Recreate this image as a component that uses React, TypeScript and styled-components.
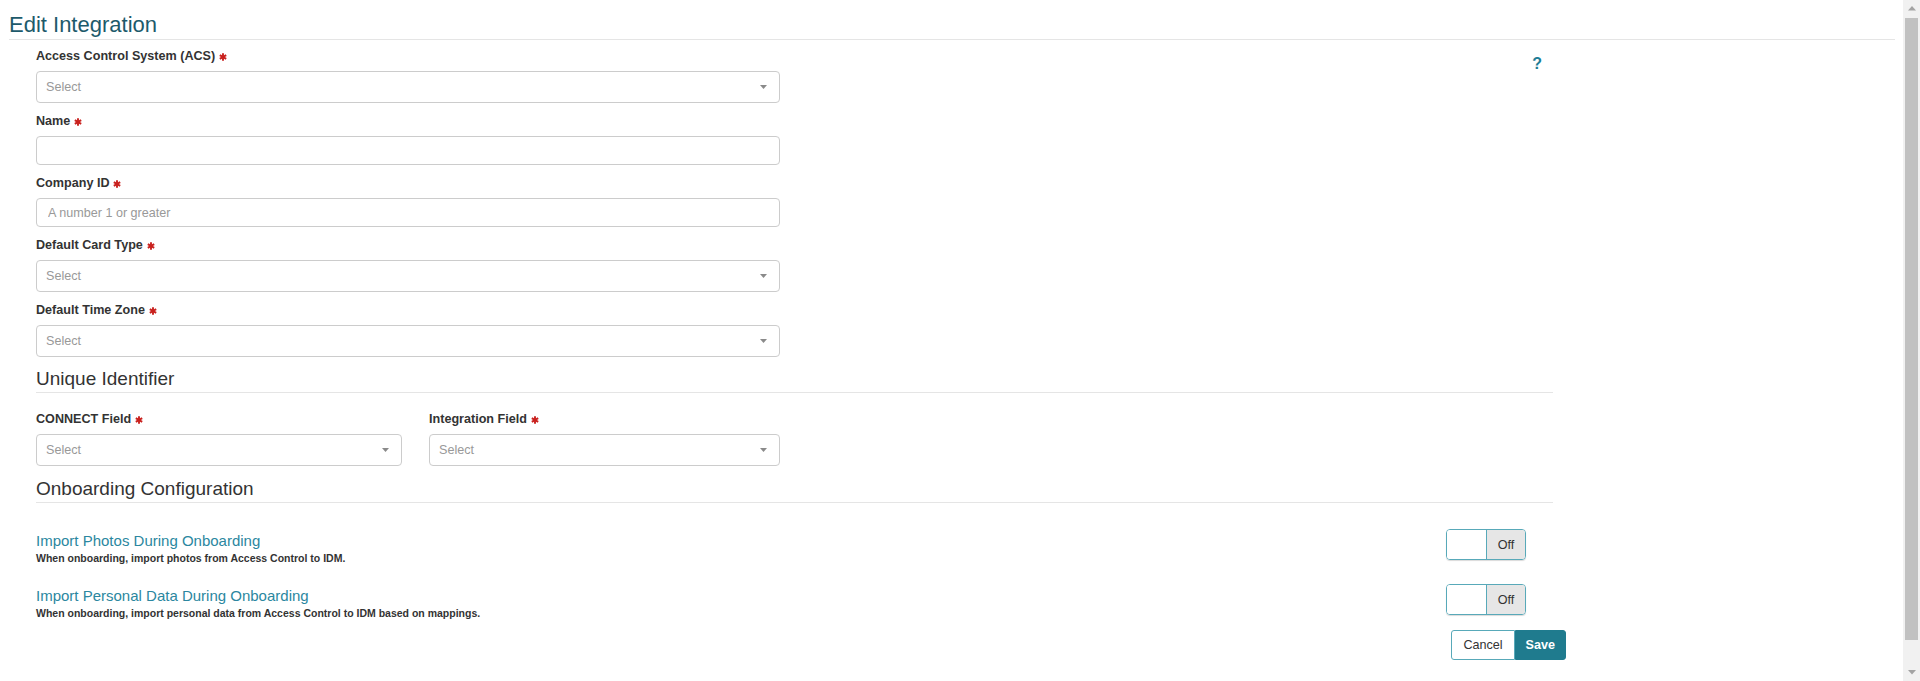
import React from "react";
import styled, { createGlobalStyle } from "styled-components";

const GlobalStyle = createGlobalStyle`
  html, body { margin: 0; padding: 0; background: #fff; overflow: hidden; }
  body { font-family: "Liberation Sans", Arial, sans-serif; color: #333; }
`;

const Shell = styled.div`
  display: flex;
  height: 681px;
`;

const Main = styled.div`
  flex: 1;
  min-width: 0;
  padding: 0 8px 0 9px;
`;

const ScrollTrack = styled.div`
  width: 17px;
  height: 681px;
  background: #f1f1f1;
  display: flex;
  flex-direction: column;
`;

const ScrollButton = styled.div`
  height: 17px;
  display: flex;
  align-items: center;
  justify-content: center;
`;

const ScrollThumb = styled.div`
  height: 622px;
  margin: 1px 2px 0 2px;
  background: #c1c1c1;
`;

const ScrollSpacer = styled.div`
  flex: 1;
`;

const Title = styled.h1`
  margin: 0;
  padding: 12px 0 1px 0;
  font-size: 22px;
  line-height: 26px;
  font-weight: normal;
  color: #1d5a6b;
  border-bottom: 1px solid #e5e5e5;
`;

const Content = styled.div`
  width: 1530px;
  padding: 7px 0 0 27px;
`;

const TopRow = styled.div`
  display: flex;
  align-items: flex-start;
`;

const FormColumn = styled.div`
  width: 744px;
`;

const HelpLink = styled.a`
  margin-left: auto;
  margin-right: 24px;
  margin-top: 9px;
  font-size: 16px;
  line-height: 16px;
  font-weight: bold;
  color: #1d7d96;
  text-decoration: none;
`;

const Field = styled.div<{ $last?: boolean }>`
  margin-bottom: ${(p) => (p.$last ? "0" : "9px")};
`;

const Label = styled.label`
  display: flex;
  align-items: center;
  gap: 4px;
  font-size: 12.6px;
  font-weight: bold;
  line-height: 18px;
  margin-bottom: 6px;
  color: #333;
`;

const Star = styled.svg`
  width: 8px;
  height: 8px;
  margin-top: 1px;
`;

const SelectBox = styled.div`
  box-sizing: border-box;
  height: 32px;
  border: 1px solid #ccc;
  border-radius: 4px;
  display: flex;
  align-items: center;
  justify-content: space-between;
  padding: 0 12px 0 9px;
  font-size: 12.6px;
  color: #999;
  background: #fff;
`;

const Caret = styled.svg`
  width: 7px;
  height: 4px;
`;

const TextInput = styled.input`
  box-sizing: border-box;
  display: block;
  width: 100%;
  height: 29px;
  border: 1px solid #ccc;
  border-radius: 4px;
  padding: 0 11px;
  font-family: "Liberation Sans", Arial, sans-serif;
  font-size: 12.6px;
  color: #333;
  outline: none;
  &::placeholder { color: #999; }
`;

const SectionHeading = styled.h2<{ $top: number }>`
  margin: ${(p) => p.$top}px 13px 0 0;
  padding-bottom: 3px;
  font-size: 19px;
  line-height: 21px;
  font-weight: normal;
  color: #333;
  border-bottom: 1px solid #e5e5e5;
`;

const IdGrid = styled.div`
  display: grid;
  grid-template-columns: 366px 351px;
  column-gap: 27px;
  margin-top: 17px;
`;

const ToggleList = styled.div`
  display: flex;
  flex-direction: column;
  gap: 19px;
  padding-top: 26px;
  margin-right: 40px;
`;

const ToggleRow = styled.div`
  display: flex;
  align-items: flex-start;
  justify-content: space-between;
`;

const ToggleText = styled.div`
  padding-top: 3px;
`;

const ToggleTitle = styled.div`
  font-size: 15px;
  line-height: 17px;
  color: #2b87a0;
  margin-bottom: 2px;
`;

const ToggleDesc = styled.div`
  font-size: 10.5px;
  line-height: 14px;
  font-weight: bold;
  color: #333;
`;

const Switch = styled.div`
  display: flex;
  box-sizing: border-box;
  width: 80px;
  height: 31px;
  border: 1px solid #58a9b9;
  border-radius: 4px;
  overflow: hidden;
  box-shadow: 0 1px 1px rgba(0, 0, 0, 0.15);
`;

const SwitchKnob = styled.div`
  width: 39px;
  background: #fff;
  border-right: 1px solid #58a9b9;
`;

const SwitchLabel = styled.div`
  flex: 1;
  display: flex;
  align-items: center;
  justify-content: center;
  background: #e6e6e6;
  font-size: 12.6px;
  color: #333;
`;

const Actions = styled.div`
  display: flex;
  justify-content: flex-end;
  margin-top: 10px;
`;

const Button = styled.button<{ $primary?: boolean }>`
  box-sizing: border-box;
  height: 30px;
  padding: 0 ${(p) => (p.$primary ? "10px" : "11px")};
  font-family: "Liberation Sans", Arial, sans-serif;
  font-size: 12.6px;
  font-weight: ${(p) => (p.$primary ? "bold" : "normal")};
  border: 1px solid ${(p) => (p.$primary ? "#1f7b8e" : "#58a9b9")};
  background: ${(p) => (p.$primary ? "#1f7b8e" : "#fff")};
  color: ${(p) => (p.$primary ? "#fff" : "#333")};
  border-radius: ${(p) => (p.$primary ? "0 3px 3px 0" : "3px 0 0 3px")};
  cursor: pointer;
`;

const Required = () => (
  <Star viewBox="0 0 8 8">
    <g stroke="#c9211e" strokeWidth="1.9" strokeLinecap="butt">
      <line x1="4" y1="0.3" x2="4" y2="7.7" />
      <line x1="0.8" y1="2.15" x2="7.2" y2="5.85" />
      <line x1="0.8" y1="5.85" x2="7.2" y2="2.15" />
    </g>
  </Star>
);

const Select = () => (
  <SelectBox>
    <span>Select</span>
    <Caret viewBox="0 0 7 4">
      <path d="M0 0 L7 0 L3.5 4 Z" fill="#8a8a8a" />
    </Caret>
  </SelectBox>
);

const FieldLabel = ({ children }: { children: React.ReactNode }) => (
  <Label>
    {children}
    <Required />
  </Label>
);

const ArrowIcon = ({ down }: { down?: boolean }) => (
  <svg width="8" height="5" viewBox="0 0 8 5">
    <path d={down ? "M0 0 L8 0 L4 4.5 Z" : "M0 4.5 L8 4.5 L4 0 Z"} fill="#a3a3a3" />
  </svg>
);

const toggles = [
  {
    title: "Import Photos During Onboarding",
    desc: "When onboarding, import photos from Access Control to IDM.",
  },
  {
    title: "Import Personal Data During Onboarding",
    desc: "When onboarding, import personal data from Access Control to IDM based on mappings.",
  },
];

export default function App() {
  return (
    <>
      <GlobalStyle />
      <Shell>
        <Main>
          <Title>Edit Integration</Title>
          <Content>
            <TopRow>
              <FormColumn>
                <Field>
                  <FieldLabel>Access Control System (ACS)</FieldLabel>
                  <Select />
                </Field>
                <Field>
                  <FieldLabel>Name</FieldLabel>
                  <TextInput />
                </Field>
                <Field>
                  <FieldLabel>Company ID</FieldLabel>
                  <TextInput placeholder="A number 1 or greater" />
                </Field>
                <Field>
                  <FieldLabel>Default Card Type</FieldLabel>
                  <Select />
                </Field>
                <Field>
                  <FieldLabel>Default Time Zone</FieldLabel>
                  <Select />
                </Field>
              </FormColumn>
              <HelpLink href="#">?</HelpLink>
            </TopRow>

            <SectionHeading $top={2}>Unique Identifier</SectionHeading>
            <IdGrid>
              <Field $last>
                <FieldLabel>CONNECT Field</FieldLabel>
                <Select />
              </Field>
              <Field $last>
                <FieldLabel>Integration Field</FieldLabel>
                <Select />
              </Field>
            </IdGrid>

            <SectionHeading $top={12}>Onboarding Configuration</SectionHeading>
            <ToggleList>
              {toggles.map((t) => (
                <ToggleRow key={t.title}>
                  <ToggleText>
                    <ToggleTitle>{t.title}</ToggleTitle>
                    <ToggleDesc>{t.desc}</ToggleDesc>
                  </ToggleText>
                  <Switch>
                    <SwitchKnob />
                    <SwitchLabel>Off</SwitchLabel>
                  </Switch>
                </ToggleRow>
              ))}
            </ToggleList>

            <Actions>
              <Button>Cancel</Button>
              <Button $primary>Save</Button>
            </Actions>
          </Content>
        </Main>
        <ScrollTrack>
          <ScrollButton>
            <ArrowIcon />
          </ScrollButton>
          <ScrollThumb />
          <ScrollSpacer />
          <ScrollButton>
            <ArrowIcon down />
          </ScrollButton>
        </ScrollTrack>
      </Shell>
    </>
  );
}
